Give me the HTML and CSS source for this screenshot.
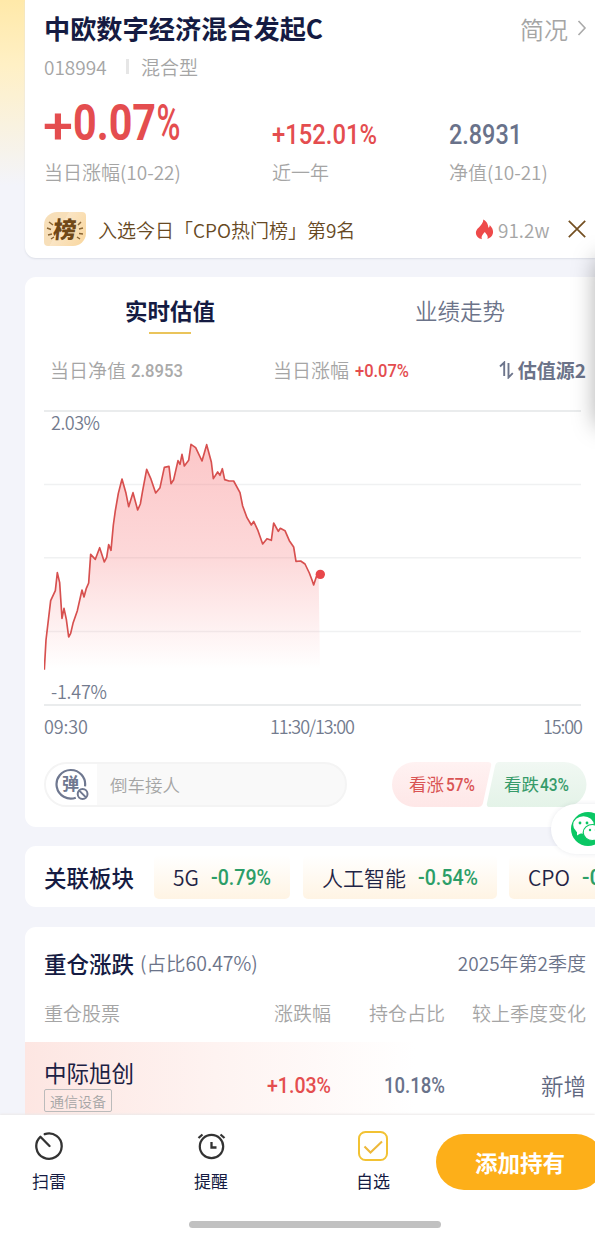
FILE: index.html
```html
<!DOCTYPE html>
<html lang="zh-CN">
<head>
<meta charset="utf-8">
<title>中欧数字经济混合发起C</title>
<link rel="stylesheet" href="styles.css">
</head>
<body>
<main class="page">
  <section class="card summary">
    <header class="title-row">
      <h1>中欧数字经济混合发起C</h1>
      <a class="profile">简况<svg width="10" height="18" viewBox="0 0 10 18"><path d="M1.500 2 8 9l-6.500 7" fill="none" stroke="#aaa" stroke-width="1.600"/></svg></a>
    </header>
    <div class="meta"><span class="code">018994</span><i class="bar"></i><span>混合型</span></div>
    <div class="stats">
      <div class="stat"><svg class="num up" width="140" height="46"><text x="-1" y="43" font-size="50" textLength="30" lengthAdjust="spacingAndGlyphs">+</text><text class="bold" x="29" y="40" font-size="50" textLength="83" lengthAdjust="spacingAndGlyphs">0.07</text><text x="112.500" y="40" font-size="50" textLength="24" lengthAdjust="spacingAndGlyphs">%</text></svg><span>当日涨幅(10-22)</span></div>
      <div class="stat"><svg class="num up" width="110" height="46"><text x="0" y="44" font-size="28.500" textLength="105" lengthAdjust="spacingAndGlyphs">+152.01%</text></svg><span>近一年</span></div>
      <div class="stat"><svg class="num slate" width="80" height="46"><text x="0" y="44" font-size="28.500" textLength="73" lengthAdjust="spacingAndGlyphs">2.8931</text></svg><span>净值(10-21)</span></div>
    </div>
    <div class="rank">
      <div class="badge">
        <svg class="rays" width="42" height="34" viewBox="0 0 42 34"><path d="M5 10l4 3M3 16l4 1.500M4 23l4-1M7 27l3-2M37 10l-3 3M39 16l-4 1M39 22l-4-.5M36 27l-3-2" fill="none" stroke="#8a6534" stroke-width="1.500"/></svg>
        <b>榜</b>
      </div>
      <span class="rank-text">入选今日「CPO热门榜」第9名</span>
      <svg class="flame" width="19" height="21" viewBox="0 0 19 21"><path d="M8.300.5c5 3 4.500 6 5.300 8.300.9-.5 1.100-1.600 1.100-2.700 2.500 2.500 3.700 5.100 3.300 8-.5 3.300-3.200 5.200-5.600 5.800 1.200-2.600-.8-4.600-2.700-6.900-2 2.600-3.900 4.400-2.700 7.200C3.400 19.700.9 17 .9 13.800c0-3.100 2.700-4.800 4.900-7.500 1.400-1.700 2.500-3.500 2.500-5.800z" fill="#ee4a4a"/></svg>
      <span class="heat">91.2w</span>
      <svg class="close" width="18" height="18" viewBox="0 0 18 18"><path d="M.8.8l16.400 16.400M17.200.8.8 17.200" stroke="#745022" stroke-width="1.700"/></svg>
    </div>
  </section>

  <section class="card estimate">
    <nav class="tabs"><span class="tab active">实时估值</span><span class="tab">业绩走势</span></nav>
    <div class="quote">
      <div class="q1">当日净值<svg class="num grey" width="54" height="18"><text x="0" y="16" font-size="19" textLength="52" lengthAdjust="spacingAndGlyphs">2.8953</text></svg></div>
      <div class="q2">当日涨幅<svg class="num up" width="56" height="18"><text x="0" y="16" font-size="19" textLength="54" lengthAdjust="spacingAndGlyphs">+0.07%</text></svg></div>
      <div class="q3"><svg width="15" height="18" viewBox="0 0 15 18"><path d="M1 5.500 5.200 1.500V15M9.500 2v14.500l4.300-4.300" fill="none" stroke="#6d758c" stroke-width="1.900"/></svg>估值源2</div>
    </div>
    <svg class="chart" width="539" height="334" viewBox="0 0 539 334">
      <defs><linearGradient id="area" x1="0" y1="0" x2="0" y2="1"><stop offset="0" stop-color="#f87a7d" stop-opacity=".42"/><stop offset=".5" stop-color="#f87a7d" stop-opacity=".29"/><stop offset="1" stop-color="#f87a7d" stop-opacity="0"/></linearGradient></defs>
      <path d="M0 1h537M0 295h537" stroke="#e3e6e8" stroke-width="1.700"/>
      <path d="M0 74.500h537M0 147.700h537M0 221.500h537" stroke="#f0f1f2" stroke-width="1.500"/>
      <g transform="translate(-14 20) scale(.33333)">
        <path fill="url(#area)" d="M43 717L48 630 62 512 76 482 82 428 89 458 96 565 102 535 109 568 116 621 122 610 129 580 142 542 156 480 162 501 169 475 176 459 182 373 196 388 209 353 223 396 230 382 236 344 243 361 250 285 256 242 265 190 276 147 288 190 296 230 309 188 323 240 331 222 338 182 350 118 362 145 377 189 390 173 403 112 417 109 423 161 431 149 444 92 450 103 456 73 463 108 476 91 483 43 497 53 516 93 530 44 544 96 550 146 563 126 570 136 577 116 584 149 597 153 611 153 630 188 638 228 651 263 664 285 671 274 684 302 698 342 711 326 724 331 731 279 745 304 751 295 765 302 778 332 791 351 798 394 812 393 825 402 838 429 846 450 851 465 861 434L866 434L870 717Z"/>
        <path fill="none" stroke="#d7504f" stroke-width="5" stroke-linejoin="round" d="M43 719L48 630 62 512 76 482 82 428 89 458 96 565 102 535 109 568 116 621 122 610 129 580 142 542 156 480 162 501 169 475 176 459 182 373 196 388 209 353 223 396 230 382 236 344 243 361 250 285 256 242 265 190 276 147 288 190 296 230 309 188 323 240 331 222 338 182 350 118 362 145 377 189 390 173 403 112 417 109 423 161 431 149 444 92 450 103 456 73 463 108 476 91 483 43 497 53 516 93 530 44 544 96 550 146 563 126 570 136 577 116 584 149 597 153 611 153 630 188 638 228 651 263 664 285 671 274 684 302 698 342 711 326 724 331 731 279 745 304 751 295 765 302 778 332 791 351 798 394 812 393 825 402 838 429 846 450 851 465 861 434"/>
        <circle cx="871" cy="433" r="14" fill="#e8474b"/>
      </g>
      <g class="axis">
        <text x="7" y="20" textLength="49">2.03%</text>
        <text x="7" y="289" textLength="56">-1.47%</text>
        <text x="0" y="324" textLength="44">09:30</text>
        <text x="226" y="324" textLength="85">11:30/13:00</text>
        <text x="499" y="324" textLength="40">15:00</text>
      </g>
    </svg>
    <div class="vote-row">
      <div class="danmu">
        <div class="danmu-icon">
          <svg width="36" height="34" viewBox="0 0 36 34"><path d="M20.800 29.700A14.300 14.300 0 1 1 30 18.300" fill="none" stroke="#6f7890" stroke-width="2.200"/><text x="15.500" y="21.500" text-anchor="middle" font-size="17" font-weight="700" fill="#6f7890">弹</text><circle cx="27.600" cy="26" r="6.800" fill="#fff"/><circle cx="27.600" cy="26" r="4.900" fill="none" stroke="#6f7890" stroke-width="2"/><path d="M24.200 22.600l6.800 6.800" stroke="#6f7890" stroke-width="2"/></svg>
        </div>
        <span>倒车接人</span>
      </div>
      <div class="votes">
        <svg width="195" height="46" viewBox="0 0 195 46">
          <defs><linearGradient id="r" x1="0" y1="0" x2="0" y2="1"><stop offset="0" stop-color="#fff2f2"/><stop offset="1" stop-color="#fee7e7"/></linearGradient><linearGradient id="g" x1="0" y1="0" x2="0" y2="1"><stop offset="0" stop-color="#f1f8f3"/><stop offset="1" stop-color="#e4f3e8"/></linearGradient></defs>
          <path d="M22.500 0H96q4 0 3 4L91 41q-1 4-5 4H22.500a22.500 22.500 0 0 1 0-45z" fill="url(#r)"/>
          <path d="M107 0h65a22.500 22.500 0 0 1 0 45H98q-4 0-3-4l8-37q1-4 4-4z" fill="url(#g)"/>
          <g class="vote-label"><text x="17" y="29" fill="#d95454">看涨</text><text x="112" y="29" fill="#369b6a">看跌</text></g>
          <g class="num"><text x="54" y="28.500" font-size="19" fill="#d95454" textLength="29" lengthAdjust="spacingAndGlyphs">57%</text><text x="148" y="28.500" font-size="19" fill="#369b6a" textLength="29" lengthAdjust="spacingAndGlyphs">43%</text></g>
        </svg>
      </div>
    </div>
  </section>

  <section class="card sectors">
    <h2>关联板块</h2>
    <div class="chip chip-a">5G<svg class="num down" width="60" height="24"><text x="0" y="19.500" font-size="22" textLength="60" lengthAdjust="spacingAndGlyphs">-0.79%</text></svg></div>
    <div class="chip chip-b">人工智能<svg class="num down" width="60" height="24"><text x="0" y="19.500" font-size="22" textLength="60" lengthAdjust="spacingAndGlyphs">-0.54%</text></svg></div>
    <div class="chip chip-c">CPO<svg class="num down" width="60" height="24"><text x="0" y="19.500" font-size="22">-0</text></svg></div>
  </section>

  <section class="card holdings">
    <header class="hold-head"><h2>重仓涨跌</h2><span class="ratio">(占比60.47%)</span><span class="quarter">2025年第2季度</span></header>
    <div class="cols head"><span>重仓股票</span><span>涨跌幅</span><span>持仓占比</span><span>较上季度变化</span></div>
    <div class="cols stock">
      <div class="name"><span>中际旭创</span><em>通信设备</em></div>
      <svg class="num up" width="64" height="24"><text x="0" y="19.500" font-size="22" textLength="64" lengthAdjust="spacingAndGlyphs">+1.03%</text></svg>
      <svg class="num slate" width="61" height="24"><text x="0" y="19.500" font-size="22" textLength="61" lengthAdjust="spacingAndGlyphs">10.18%</text></svg>
      <span class="change">新增</span>
    </div>
  </section>

  <div class="side-shadow"></div>
  <div class="wechat">
    <svg width="34" height="34" viewBox="0 0 34 34"><circle cx="17" cy="17" r="17" fill="#0ac764"/><ellipse cx="12.500" cy="13" rx="10.300" ry="8.700" fill="#fff"/><path d="M6 18v5.500l5-3z" fill="#fff"/><ellipse cx="21.500" cy="20.500" rx="9.300" ry="8" fill="#fff" stroke="#0ac764" stroke-width="1.200"/><g fill="#0ac764"><circle cx="9" cy="11" r="1.400"/><circle cx="16" cy="11" r="1.400"/><circle cx="19" cy="18" r="1.200"/><circle cx="25" cy="18" r="1.200"/></g></svg>
  </div>

  <footer class="dock">
    <div class="actions">
      <div class="action"><svg width="30" height="30" viewBox="0 0 30 30"><path d="M10.700 3.200A12.700 12.700 0 1 1 6.400 5.800L15.500 15" fill="none" stroke="#333" stroke-width="2.300" stroke-linecap="round" stroke-linejoin="round"/></svg><span>扫雷</span></div>
      <div class="action"><svg width="30" height="30" viewBox="0 0 30 30"><circle cx="15.500" cy="15.500" r="11.700" fill="none" stroke="#333" stroke-width="2.200"/><path d="M15.500 11v5.500h5M2.500 7l4-3.500M28.500 7l-4-3.500" fill="none" stroke="#333" stroke-width="2.300"/></svg><span>提醒</span></div>
      <div class="action"><svg width="30" height="30" viewBox="0 0 30 30"><rect x="1" y="1" width="28" height="28" rx="6.500" fill="none" stroke="#f2c233" stroke-width="2"/><path d="M6.500 15.500l6 6L24 10.500" fill="none" stroke="#edb83a" stroke-width="2.100"/></svg><span>自选</span></div>
      <button class="add">添加持有</button>
    </div>
    <div class="home"></div>
  </footer>
</main>
</body>
</html>
```
FILE: styles.css
```css
* { box-sizing: border-box; }
body { margin: 0; font-family: "Noto Sans CJK SC", sans-serif; font-weight: 350; color: #a5a5a5; }
svg { display: block; flex: none; }
h1, h2 { margin: 0; color: #151b42; }
.page { position: relative; width: 595px; height: 1241px; overflow: hidden; padding-left: 25px; display: flex; flex-direction: column; gap: 19px; background: linear-gradient(#ffe9a9, #fff0c5 65px, #f3f4fa 185px); white-space: nowrap; }
.card { flex: none; background: #fff; border-radius: 11px 0 0 11px; padding-left: 19px; overflow: hidden; }
.num { font-family: Roboto, "Liberation Sans", sans-serif; font-weight: 500; overflow: visible; }
.bold { font-weight: 700; }
.up { fill: #e44d4f; }
.slate { fill: #69728a; }
.grey { fill: #aaa; }
.down { fill: #2c9e68; }

.summary { height: 258px; border-radius: 0 0 0 11px; box-shadow: 0 1px 2px #dcdfe7; }
.title-row { display: flex; justify-content: space-between; height: 47px; padding: 9px 8px 0 0; }
h1 { font-size: 26.200px; line-height: 38px; font-weight: 700; }
.profile { display: flex; align-items: center; gap: 9px; height: 38px; font-size: 24px; }
.meta { display: flex; align-items: center; height: 38px; font-size: 19px; }
.code { width: 82px; }
.bar { width: 3px; height: 15px; margin-right: 12px; background: #e6e6e6; }
.stats { display: grid; grid-template-columns: 228px 177px 1fr; padding-top: 15px; height: 113px; font-size: 19px; }
.stat span { display: block; line-height: 26px; margin-top: 13px; }
.rank { display: flex; align-items: center; height: 60px; padding: 0 9px 0 0; margin-top: 1px; font-size: 19px; color: #674923; }
.badge { position: relative; width: 42px; height: 34px; margin-right: 12px; border-radius: 13px 4px 13px 4px; background: linear-gradient(120deg, #f7dfb9 40%, #fae5c5 41%, #f9d69c); text-align: center; }
.badge b { position: relative; display: block; font-size: 23px; line-height: 32px; font-weight: 900; color: #704817; transform: skewX(-6deg); }
.rays { position: absolute; left: 0; top: 0; }
.flame { margin-left: auto; margin-right: 4px; }
.heat { color: #a5a5a5; width: 70px; }

.estimate { height: 550px; }
.tabs { display: flex; height: 66px; padding: 15px 0 0 81px; }
.tab { flex: none; width: 290px; font-size: 22.500px; line-height: 36px; color: #6b7389; }
.active { display: flex; flex-direction: column; font-weight: 700; color: #151b42; }
.active::after { content: ""; width: 42px; height: 2px; margin: 4px 0 0 24px; background: #eac45b; }
.quote { display: flex; align-items: center; height: 53px; padding: 0 9px 0 6px; font-size: 19px; }
.quote > div { display: flex; align-items: center; }
.q1 { gap: 5px; width: 223px; }
.q2 { gap: 6px; }
.quote .q3 { margin-left: auto; gap: 4px; font-weight: 700; color: #6b7389; }
.chart { margin-top: 14px; }
.axis { font-family: "Noto Sans CJK SC", sans-serif; font-size: 18px; fill: #737b8e; }
.vote-row { display: flex; justify-content: space-between; padding: 18px 8px 0 0; }
.danmu { display: flex; align-items: center; width: 303px; height: 45px; border: 2px solid #f4f4f4; border-radius: 23px; overflow: hidden; background: #f9f9f9; font-size: 17.500px; }
.danmu-icon { display: flex; align-items: center; width: 51px; height: 41px; margin-right: 13px; padding-left: 9px; background: #fff; }
.votes { width: 195px; }
.vote-label { font-size: 17.500px; font-weight: 400; }

.sectors { display: flex; align-items: center; height: 61px; }
h2 { font-size: 22.500px; line-height: 34px; font-weight: 500; }
.sectors h2 { flex: none; width: 110px; }
.chip { display: flex; align-items: center; flex: none; height: 44px; padding-left: 19px; border-radius: 5px; background: linear-gradient(#fff, #fff4e4); color: #1f2445; font-size: 21px; gap: 12px; }
.chip-a { width: 136px; margin-right: 13px; }
.chip-b { width: 194px; margin-right: 12px; }
.chip-c { width: 140px; }

.holdings { height: 220px; margin-top: 1px; border-radius: 11px 0 0 0; }
.hold-head { display: flex; align-items: center; height: 71px; padding-right: 9px; color: #6b7389; font-size: 19px; }
.ratio { margin-left: 6px; font-size: 19.500px; }
.quarter { margin-left: auto; }
.cols { display: grid; grid-template-columns: 187px 100px 114px 141px; justify-items: end; align-items: center; margin-left: -19px; padding-left: 19px; }
.cols > :first-child { justify-self: start; }
.head { height: 44px; padding-bottom: 16px; font-size: 19px; }
.stock { height: 86px; background: linear-gradient(90deg, #fde6e2, #fef3f1 190px, #fff 390px); }
.name { display: flex; flex-direction: column; align-items: flex-start; gap: 1px; margin-top: -1px; font-size: 22.500px; line-height: 31px; font-weight: 400; color: #1c2144; }
.name em { height: 23px; padding: 0 5px; border: 1px solid #bbb; border-radius: 2px; font-size: 14px; line-height: 22px; font-style: normal; font-weight: 350; color: #a5a5a5; }
.change { font-size: 22.500px; color: #5f687f; }

.side-shadow { position: absolute; left: 600px; top: 262px; width: 50px; height: 160px; box-shadow: 0 0 24px 3px rgba(0,0,0,.36); }
.wechat { position: absolute; left: 551px; top: 804px; width: 80px; height: 50px; padding: 8px 0 0 20px; border-radius: 25px; background: #fff; box-shadow: 0 0 5px rgba(40,50,80,.1); }

.dock { position: absolute; left: 0; bottom: 0; width: 595px; height: 126px; background: #fff; box-shadow: 0 -1px 2px #eceaea; }
.actions { display: flex; }
.action { display: flex; flex-direction: column; align-items: center; width: 162px; padding-top: 16px; flex: none; }
.action:first-child { width: 98px; margin-right: 32px; }
.action span { margin-top: 7px; font-size: 17px; line-height: 26px; font-weight: 400; color: #151b42; }
.add { flex: none; width: 168px; height: 56px; margin: 19px 0 0 -18px; border: 0; border-radius: 28px; background: #fdaf19; color: #fff; font: 700 22.500px "Noto Sans CJK SC", sans-serif; }
.home { width: 252px; height: 7px; margin: 27px 0 0 189px; border-radius: 4px; background: #c1c1c1; }
```
